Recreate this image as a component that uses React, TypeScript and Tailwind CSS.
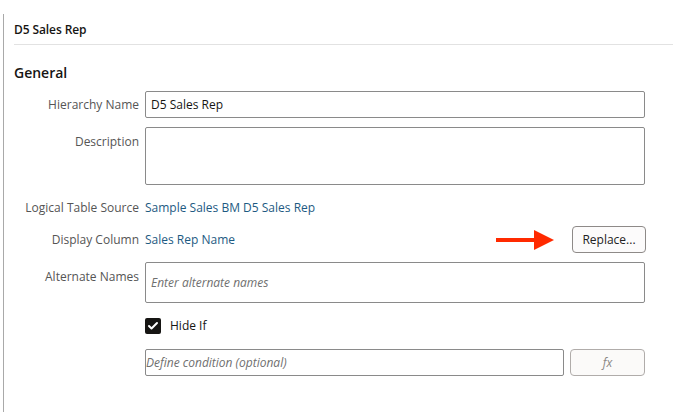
import { Check } from 'lucide-react'

const font = { fontFamily: '"Open Sans", "Noto Sans", sans-serif' }

function Label({ children }: { children: React.ReactNode }) {
  return <div className="w-[145px] shrink-0 pr-[6px] text-right text-[12px] text-[#555]">{children}</div>
}

export default function App() {
  return (
    <div className="relative h-[412px] w-[673px] overflow-hidden bg-white text-[#161513]" style={font}>
      <div className="absolute left-[3px] top-[14px] bottom-0 w-px bg-[#a9a9a9]" />

      <div className="pl-[14px]">
        {/* header */}
        <div className="flex h-[45px] items-end border-b border-[#e2e2e2] pb-[8px] pt-[20px]">
          <span className="text-[12px] font-semibold leading-none tracking-[-0.1px]">D5 Sales Rep</span>
        </div>

        <div className="pt-[19px] text-[14px] font-semibold leading-[18px]">General</div>
      </div>

      <div className="mt-[9px] flex flex-col">
        {/* Hierarchy Name */}
        <div className="flex items-center">
          <Label>Hierarchy Name</Label>
          <div className="flex h-[27px] w-[500px] items-center rounded-[2px] border border-[#8a8a8a] px-[5px] text-[12px]">
            D5 Sales Rep
          </div>
        </div>

        {/* Description */}
        <div className="mt-[9px] flex">
          <div className="pt-[6px]">
            <Label>Description</Label>
          </div>
          <div className="h-[58px] w-[500px] rounded-[2px] border border-[#8a8a8a]" />
        </div>

        {/* Logical Table Source */}
        <div className="mt-[15px] flex h-[16px] items-center">
          <Label>Logical Table Source</Label>
          <span className="text-[12px] text-[#1d5a82]">Sample Sales BM D5 Sales Rep</span>
        </div>

        {/* Display Column */}
        <div className="mt-[10px] flex h-[27px] items-center">
          <Label>Display Column</Label>
          <span className="text-[12px] text-[#1d5a82]">Sales Rep Name</span>
          <svg className="ml-[261px]" width="60" height="22" viewBox="0 0 60 22">
            <rect x="0" y="9" width="40" height="4" fill="#ff2a00" />
            <polygon points="38,1 58,11 38,21" fill="#ff2a00" />
          </svg>
          <button className="ml-[16px] flex h-[27px] w-[74px] items-center justify-center rounded-[4px] border border-[#8e8a88] bg-[#fcfbfb] text-[12px] text-[#222]">
            Replace...
          </button>
        </div>

        {/* Alternate Names */}
        <div className="mt-[9px] flex">
          <div className="pt-[6px]">
            <Label>Alternate Names</Label>
          </div>
          <div className="flex h-[41px] w-[500px] items-center rounded-[2px] border border-[#8a8a8a] px-[5px] text-[12px] italic text-[#6f6f6f]">
            Enter alternate names
          </div>
        </div>

        {/* Hide If */}
        <div className="mt-[14px] flex items-center pl-[145px]">
          <div className="flex h-[16px] w-[16px] items-center justify-center rounded-[2px] bg-[#161513]">
            <Check className="h-[12px] w-[12px] text-white" strokeWidth={4} />
          </div>
          <span className="ml-[9px] text-[12px]">Hide If</span>
        </div>

        {/* Condition */}
        <div className="mt-[14px] flex items-center pl-[145px]">
          <div className="flex h-[27px] w-[419px] items-center rounded-[2px] border border-[#8a8a8a] text-[12px] italic text-[#6f6f6f]">
            Define condition (optional)
          </div>
          <button className="ml-[6px] flex h-[27px] w-[75px] items-center justify-center rounded-[4px] border border-[#b0acaa] bg-[#fbfaf9] text-[12px] italic text-[#8a8784]">
            fx
          </button>
        </div>
      </div>
    </div>
  )
}
